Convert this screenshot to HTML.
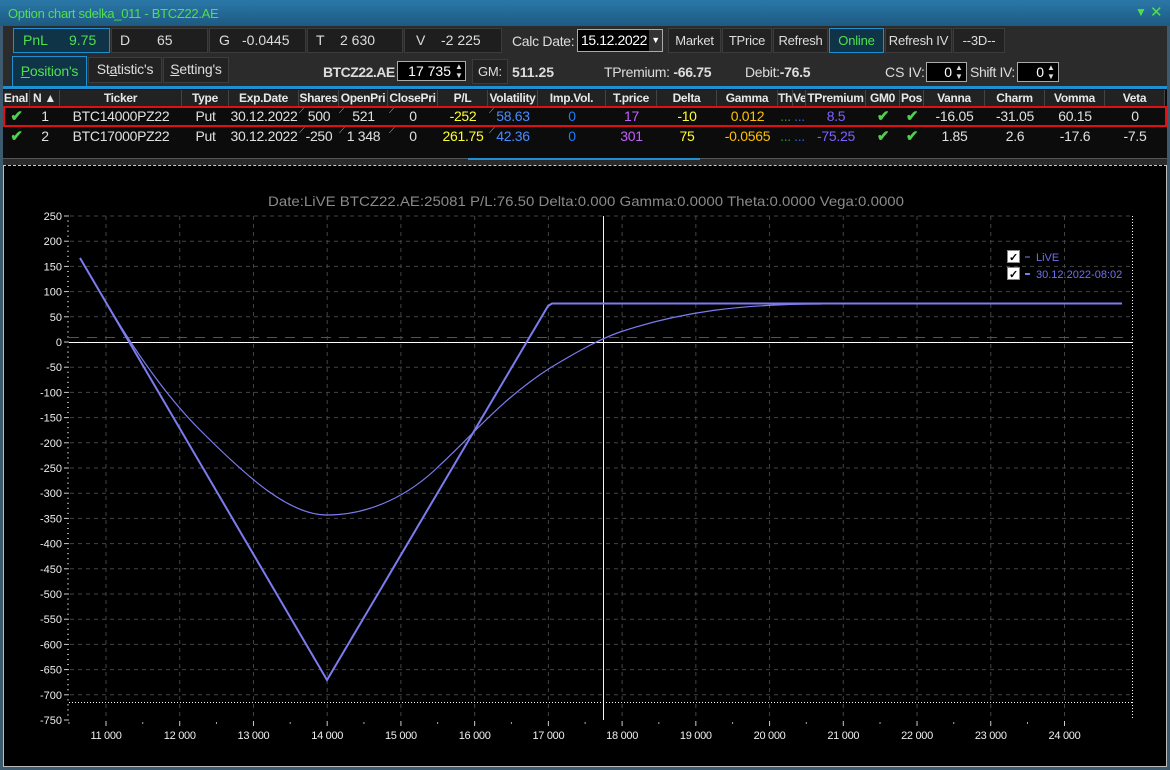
<!DOCTYPE html>
<html><head><meta charset="utf-8">
<style>
*{box-sizing:border-box;margin:0;padding:0}
body{width:1170px;height:770px;background:#2b2b2b;font-family:"Liberation Sans",sans-serif;font-size:13px;color:#ddd;position:relative;overflow:hidden}
.a{position:absolute;white-space:nowrap}
.box{position:absolute;background:#1e1e1e;border:1px solid #3c3c3c;height:25px;line-height:23px;color:#ddd;font-size:14px}
.btn{position:absolute;background:#222;border:1px solid #3c3c3c;height:25px;line-height:23px;text-align:center;color:#ddd;font-size:13px;letter-spacing:-0.2px}
.th{position:absolute;top:90px;height:16px;line-height:16px;text-align:center;font-weight:bold;font-size:12px;letter-spacing:-0.3px;color:#e8e8e8;background:#222;border-right:1px solid #444;overflow:hidden}
.td{position:absolute;height:19px;line-height:19px;text-align:center;font-size:14px;letter-spacing:-0.3px;color:#e0e0e0;overflow:hidden}
.inp{position:absolute;background:#000;border:1px solid #aaa;height:20px;line-height:18px;text-align:right;color:#fff;font-size:14px;padding-right:14px}
</style></head><body>
<div class="a" style="left:0;top:0;width:1170px;height:26px;background:linear-gradient(#2a78a8,#1d5a82)"></div>
<div class="a" style="left:8px;top:6px;color:#4fe04f;font-size:13px;letter-spacing:-0.3px">Option chart sdelka_011 - BTCZ22.AE</div>
<div class="a" style="left:1135px;top:5px;color:#4fe04f;font-size:12px">▼</div>
<div class="a" style="left:1150px;top:3px;color:#4fe04f;font-size:15px">✕</div>
<div class="a" style="left:0;top:26px;width:3px;height:744px;background:#3e5a6e"></div>
<div class="a" style="left:1167px;top:26px;width:3px;height:744px;background:#3e5a6e"></div>
<div class="a" style="left:0;top:767px;width:1170px;height:3px;background:#3e5a6e"></div>

<div class="box" style="left:13px;top:28px;width:97px;border-color:#1e8fd0;background:#0f3448;color:#4fe04f"><span class="a" style="left:9px">PnL</span><span class="a" style="left:55px">9.75</span></div>
<div class="box" style="left:111px;top:28px;width:97px"><span class="a" style="left:8px">D</span><span class="a" style="left:45px">65</span></div>
<div class="box" style="left:209px;top:28px;width:97px"><span class="a" style="left:9px">G</span><span class="a" style="left:32px">-0.0445</span></div>
<div class="box" style="left:307px;top:28px;width:96px"><span class="a" style="left:8px">T</span><span class="a" style="left:32px">2 630</span></div>
<div class="box" style="left:404px;top:28px;width:98px"><span class="a" style="left:11px">V</span><span class="a" style="left:36px">-2 225</span></div>
<div class="a" style="left:512px;top:33px;font-size:14px;color:#ddd;letter-spacing:-0.3px">Calc Date:</div>
<div class="a" style="left:577px;top:29px;width:86px;height:23px;background:#000;border:1px solid #aaa;color:#fff;font-size:14px;line-height:21px;padding-left:3px;letter-spacing:-0.4px">15.12.2022<span class="a" style="right:0;top:0;width:13px;height:21px;background:#333;color:#fff;font-size:9px;text-align:center">▼</span></div>
<div class="btn" style="left:668px;top:28px;width:53px">Market</div>
<div class="btn" style="left:722px;top:28px;width:50px">TPrice</div>
<div class="btn" style="left:773px;top:28px;width:55px">Refresh</div>
<div class="btn" style="left:829px;top:28px;width:55px;border-color:#1e8fd0;background:#0f3448;color:#4fe04f">Online</div>
<div class="btn" style="left:885px;top:28px;width:67px">Refresh IV</div>
<div class="btn" style="left:953px;top:28px;width:52px">--3D--</div>

<div class="btn" style="left:12px;top:56px;width:75px;height:30px;line-height:28px;border-color:#1e8fd0;background:#0f3448;color:#4fe04f;font-size:14px;border-bottom:none"><u>P</u>osition's</div>
<div class="btn" style="left:88px;top:57px;width:74px;height:26px;font-size:14px">St<u>a</u>tistic's</div>
<div class="btn" style="left:163px;top:57px;width:66px;height:26px;font-size:14px"><u>S</u>etting's</div>
<div class="a" style="left:323px;top:64px;font-size:14px;font-weight:bold;color:#ddd;letter-spacing:-0.5px">BTCZ22.AE</div>
<div class="inp" style="left:397px;top:61px;width:69px">17 735</div>
<div class="a" style="left:455px;top:62px;color:#ddd;font-size:8px;line-height:9px">▲<br>▼</div>
<div class="btn" style="left:472px;top:59px;width:36px;font-size:13px">GM:</div>
<div class="a" style="left:512px;top:64px;font-size:14px;font-weight:bold;color:#ddd">511.25</div>
<div class="a" style="left:604px;top:64px;font-size:14px;color:#ddd;letter-spacing:-0.3px">TPremium: <b>-66.75</b></div>
<div class="a" style="left:745px;top:64px;font-size:14px;color:#ddd;letter-spacing:-0.3px">Debit:<b>-76.5</b></div>
<div class="a" style="left:885px;top:64px;font-size:14px;color:#ddd">CS IV:</div>
<div class="inp" style="left:926px;top:62px;width:41px">0</div>
<div class="a" style="left:955px;top:63px;color:#ddd;font-size:8px;line-height:9px">▲<br>▼</div>
<div class="a" style="left:970px;top:64px;font-size:14px;color:#ddd;letter-spacing:-0.4px">Shift IV:</div>
<div class="inp" style="left:1017px;top:62px;width:42px">0</div>
<div class="a" style="left:1047px;top:63px;color:#ddd;font-size:8px;line-height:9px">▲<br>▼</div>

<div class="a" style="left:3px;top:86px;width:1164px;height:3px;background:#1e8fd0"></div>
<div class="a" style="left:3px;top:89px;width:1164px;height:70px;background:#0c0c0c;border-bottom:1px solid #555"></div>
<div id="tbl"></div>
<div class="a" style="left:3px;top:106px;width:1164px;height:21px;border:2px solid #e01010"></div>
<div class="a" style="left:468px;top:158px;width:232px;height:2px;background:#1e8fd0"></div>

<div class="a" style="left:3px;top:165px;width:1164px;height:602px;background:#000;border:1px solid #bbb;border-top:1px dashed #ccc"></div>
<svg class="a" style="left:0;top:0" width="1170" height="770" id="ch"></svg>

<script>
var cols=[[3,27,"Enal"],[30,30,"N ▲"],[60,122,"Ticker"],[182,47,"Type"],[229,70,"Exp.Date"],[299,40,"Shares"],[339,49,"OpenPri"],[388,50,"ClosePri"],[438,50,"P/L"],[488,50,"Volatility"],[538,68,"Imp.Vol."],[606,51,"T.price"],[657,60,"Delta"],[717,61,"Gamma"],[778,15,"Th"],[793,13,"Ve"],[806,60,"TPremium"],[866,34,"GM0"],[900,24,"Pos"],[924,61,"Vanna"],[985,60,"Charm"],[1045,60,"Vomma"],[1105,60,"Veta"]];
var h="";
cols.forEach(function(c){h+='<div class="th" style="left:'+c[0]+'px;width:'+c[1]+'px">'+c[2]+'</div>';});
var chk='<span style="color:#4fd04f;font-weight:bold;font-size:15px">✔</span>';
var rows=[
["1","BTC14000PZ22","Put","30.12.2022","500","521","0","-252","58.63","0","17","-10","0.012","...","...","8.5",chk,chk,"-16.05","-31.05","60.15","0"],
["2","BTC17000PZ22","Put","30.12.2022","-250","1 348","0","261.75","42.36","0","301","75","-0.0565","...","...","-75.25",chk,chk,"1.85","2.6","-17.6","-7.5"]];
var colors={6:"#e0e0e0",7:"#ffff30",8:"#4a8cff",9:"#1e7cff",10:"#c060ff",11:"#ffff30",12:"#ffc000",13:"#2a9a2a",14:"#2060ff",15:"#8060ff"};
rows.forEach(function(r,i){var top=107+i*20;
 h+='<div class="td" style="left:3px;width:27px;top:'+top+'px">'+chk+'</div>';
 for(var k=0;k<r.length;k++){var c=cols[k+1];
  h+='<div class="td" style="left:'+c[0]+'px;width:'+c[1]+'px;top:'+top+'px;color:'+(colors[k]||"#e0e0e0")+'">'+r[k]+'</div>';}
 [299,339,389,489].forEach(function(p){h+='<div class="a" style="left:'+p+'px;top:'+(top-2)+'px;color:#aaa;font-size:9px">⟋</div>';});
});
document.getElementById("tbl").innerHTML=h;

var s="",X=function(p){return 106+(p-11000)*0.07373},Y=function(v){return 342-v*0.504};
for(var v=-750;v<=250;v+=50){var y=Y(v);
 if(v!=0&&v!=-750)s+='<line x1="70" x2="1133" y1="'+y+'" y2="'+y+'" stroke="#444" stroke-dasharray="4,4"/>';
 s+='<line x1="64" x2="69" y1="'+y+'" y2="'+y+'" stroke="#ccc"/>';
 s+='<text x="62" y="'+(y+4)+'" fill="#eee" font-size="11" text-anchor="end">'+v+'</text>';
 for(var m=1;m<5;m++){var yy=y-m*5.04; if(v<250)s+='<line x1="67" x2="69" y1="'+yy+'" y2="'+yy+'" stroke="#aaa"/>';}}
for(var p=11000;p<=24000;p+=1000){var x=X(p);
 s+='<line x1="'+x+'" x2="'+x+'" y1="216" y2="720" stroke="#444" stroke-dasharray="4,4"/>';
 s+='<line x1="'+x+'" x2="'+x+'" y1="721" y2="726" stroke="#ccc"/>';
 s+='<line x1="'+(x-37)+'" x2="'+(x-37)+'" y1="722" y2="724" stroke="#aaa"/>';
 s+='<text x="'+x+'" y="739" fill="#eee" font-size="11" text-anchor="middle" letter-spacing="-0.3">'+(p/1000)+' 000</text>';}
s+='<line x1="69" x2="1133" y1="337.5" y2="337.5" stroke="#e01818" stroke-dasharray="10,8"/>';
s+='<line x1="69" x2="1133" y1="342.5" y2="342.5" stroke="#fff"/>';
s+='<line x1="69" x2="1133" y1="702.5" y2="702.5" stroke="#fff" stroke-dasharray="1,2"/>';
s+='<line x1="1132.5" x2="1132.5" y1="216" y2="720" stroke="#fff" stroke-dasharray="1,2"/>';
s+='<line x1="603.5" x2="603.5" y1="216" y2="720" stroke="#ffffa0"/>';
s+='<polyline points="80,258 327,680 548,306 552,303.5 1122,303.5" fill="none" stroke="#7c7cf0" stroke-width="2"/>';
s+='<path d="M80,258 C110,310 150,380 200,430 C250,480 290,515 327,515 C370,515 410,495 440,465 C470,438 500,400 550,368 C580,350 600,339 620,332 C680,312 740,304 822,304" fill="none" stroke="#7c7cf0" stroke-width="1.2"/>';
s+='<text x="268" y="206" fill="#8a8a8a" font-size="14" textLength="636" lengthAdjust="spacingAndGlyphs">Date:LiVE  BTCZ22.AE:25081  P/L:76.50  Delta:0.000  Gamma:0.0000  Theta:0.0000  Vega:0.0000</text>';
[[251,"LiVE"],[268,"30.12.2022-08:02"]].forEach(function(l){
 s+='<rect x="1007.5" y="'+(l[0]-0.5)+'" width="12" height="12" fill="#fff" stroke="#888"/><text x="1009" y="'+(l[0]+10)+'" font-size="11" fill="#000" font-weight="bold">✓</text>';
 s+='<line x1="1025" x2="1030" y1="'+(l[0]+6)+'" y2="'+(l[0]+6)+'" stroke="#7c7cf0" stroke-width="'+(l[1]=="LiVE"?1:2)+'"/>';
 s+='<text x="1036" y="'+(l[0]+10)+'" font-size="11" fill="#6f6ff0">'+l[1]+'</text>';});
document.getElementById("ch").innerHTML=s;
</script>
</body></html>
